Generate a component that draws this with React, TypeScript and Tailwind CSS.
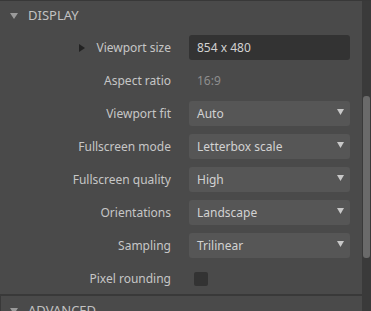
import React from "react"

const font = { fontFamily: '"Noto Sans", "Open Sans", sans-serif' }

function Caret() {
  return (
    <svg width="7" height="6" viewBox="0 0 7 6" className="shrink-0">
      <path d="M0 0 H7 L3.5 6 Z" fill="#c8c8c8" />
    </svg>
  )
}

function Select({ value }: { value: string }) {
  return (
    <div className="flex h-[25px] w-[161px] items-center justify-between rounded-[3px] bg-[#565656] pl-[8px] pr-[6px] text-[#d2d2d2]">
      <span>{value}</span>
      <div className="-mt-[4px]">
        <Caret />
      </div>
    </div>
  )
}

function Row({ label, children, expand }: { label: string; children: React.ReactNode; expand?: boolean }) {
  return (
    <div className="flex h-[25px] shrink-0 items-center">
      <div className="flex w-[171px] items-center justify-end text-[#c6c6c6]">
        {expand && (
          <svg width="6" height="8" viewBox="0 0 6 8" className="mr-[11px]">
            <path d="M0 0 L6 4 L0 8 Z" fill="#222" />
          </svg>
        )}
        <span>{label}</span>
      </div>
      <div className="ml-[18px]">{children}</div>
    </div>
  )
}

export default function App() {
  return (
    <div className="flex h-[311px] w-[371px] overflow-hidden border-t border-[#383838] bg-[#4a4a4a] text-[12px]" style={font}>
      <div className="flex w-[362px] shrink-0 flex-col">
        {/* DISPLAY header */}
        <div className="flex h-[30px] shrink-0 items-center gap-[10px] pl-[10px] text-[13px] text-[#c2c2c2]">
          <svg width="8" height="6" viewBox="0 0 8 6">
            <path d="M0 0 H8 L4 6 Z" fill="#9a9a9a" />
          </svg>
          <span>DISPLAY</span>
        </div>

        <div className="flex shrink-0 flex-col gap-[8px] pt-[4px]">
          <Row label="Viewport size" expand>
            <div className="flex h-[25px] w-[161px] items-center rounded-[3px] bg-[#333333] px-[8px] text-[#d2d2d2]">
              854 x 480
            </div>
          </Row>
          <Row label="Aspect ratio">
            <span className="pl-[8px] text-[#8e8e8e]">16:9</span>
          </Row>
          <Row label="Viewport fit">
            <Select value="Auto" />
          </Row>
          <Row label="Fullscreen mode">
            <Select value="Letterbox scale" />
          </Row>
          <Row label="Fullscreen quality">
            <Select value="High" />
          </Row>
          <Row label="Orientations">
            <Select value="Landscape" />
          </Row>
          <Row label="Sampling">
            <Select value="Trilinear" />
          </Row>
          <Row label="Pixel rounding">
            <div className="ml-[5px] h-[14px] w-[14px] rounded-[2px] bg-[#333333]" />
          </Row>
        </div>

        {/* ADVANCED header */}
        <div className="mt-[3px] h-[2px] shrink-0 bg-[#393939]" />
        <div className="flex h-[30px] shrink-0 items-center gap-[10px] border-l border-[#393939] pl-[9px] text-[13px] text-[#c2c2c2]">
          <svg width="8" height="6" viewBox="0 0 8 6">
            <path d="M0 0 H8 L4 6 Z" fill="#9a9a9a" />
          </svg>
          <span>ADVANCED</span>
        </div>
      </div>

      {/* scrollbar */}
      <div className="flex w-[9px] shrink-0 flex-col bg-[#3a3a3a] pt-[95px]">
        <div className="mx-auto h-[162px] w-[7px] shrink-0 rounded-[3px] bg-[#6a6a6a]" />
      </div>
    </div>
  )
}
